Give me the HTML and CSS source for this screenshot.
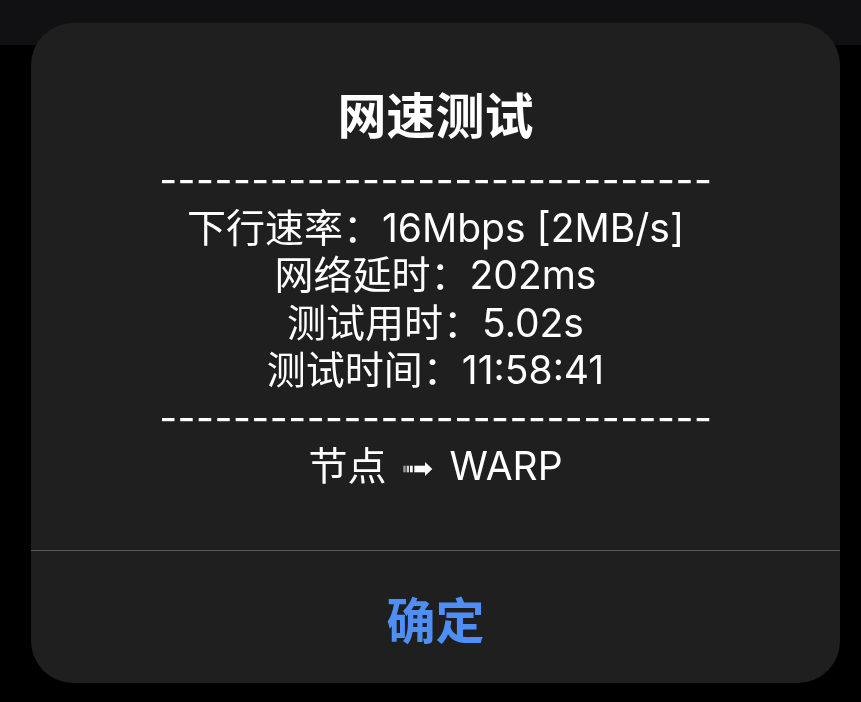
FILE: index.html
```html
<!DOCTYPE html>
<html lang="zh-CN">
  <head>
    <meta charset="UTF-8" />
    <meta name="viewport" content="width=device-width, initial-scale=1.0" />
    <title>网速测试</title>
    <link rel="stylesheet" href="styles.css">
  </head>
  <body>
    <div class="topbar"></div>

    <div class="overlay">
      <div class="alert">
        <div class="alert-body">
          <h1 class="alert-title">网速测试</h1>
          <div class="alert-message">
            <div class="dashes">------------------------------</div>
            <div>下行速率：16Mbps [2MB/s]</div>
            <div>网络延时：202ms</div>
            <div>测试用时：5.02s</div>
            <div>测试时间：11:58:41</div>
            <div class="dashes">------------------------------</div>
            <div>节点<svg class="arrow" width="30" height="14" viewBox="0 0 30 14">
                <rect x="0.3" y="3.7" width="2.4" height="6.6" fill="#fff" opacity="0.55" />
                <rect x="3.7" y="3.7" width="2.3" height="6.6" fill="#fff" opacity="0.8" />
                <rect x="7" y="3.7" width="2.7" height="6.6" fill="#fff" />
                <rect x="11.3" y="3.7" width="11" height="6.6" fill="#fff" />
                <polygon points="22,0 29.3,7 22,14" fill="#fff" />
              </svg>WARP</div>
          </div>
        </div>
        <button class="alert-btn">确定</button>
      </div>
    </div>
  </body>
</html>
```

FILE: styles.css
```css
body {
  margin: 0;
  background-color: #000;
  font-family: Inter, "Noto Sans CJK SC", sans-serif;
  color: #fff;
}

.topbar {
  height: 45px;
  background-color: #111113;
}

.overlay {
  position: fixed;
  top: 0;
  left: 0;
  right: 0;
  bottom: 0;
  padding: 23px 0 0 31px;
}

.alert {
  width: 809px;
  height: 660px;
  background-color: #1f1f1f;
  border-radius: 42px;
  display: flex;
  flex-direction: column;
  overflow: hidden;
}

.alert-body {
  height: 528px;
  box-sizing: border-box;
  padding: 60px 20px 0;
  border-bottom: 1px solid #58585b;
  text-align: center;
}

.alert-title {
  margin: 0;
  font-size: 49px;
  font-weight: 700;
  line-height: 60px;
  font-family: "Noto Sans CJK SC", sans-serif;
}

.alert-message {
  margin-top: 13px;
  font-size: 39px;
  line-height: 47.6px;
}

.dashes {
  letter-spacing: 0.5px;
  margin-right: -0.5px;
}

.arrow {
  margin: 0 16px 0 17px;
  vertical-align: middle;
}

.alert-btn {
  flex: 1;
  border: none;
  background: none;
  color: #4e8ef5;
  font-family: "Noto Sans CJK SC", sans-serif;
  font-size: 49px;
  font-weight: 700;
  cursor: pointer;
}
```
